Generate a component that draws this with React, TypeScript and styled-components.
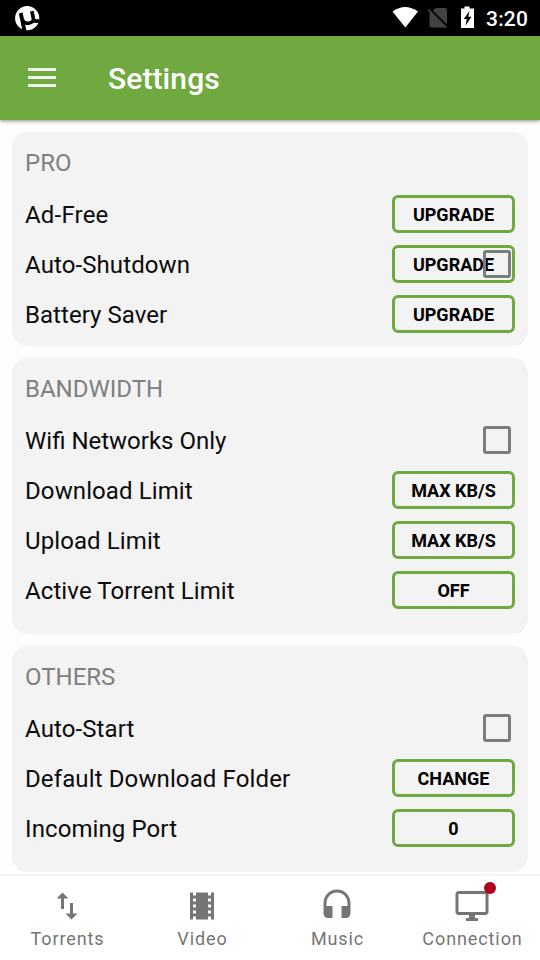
import React from "react";
import styled, { createGlobalStyle } from "styled-components";

const Global = createGlobalStyle`
  * { box-sizing: border-box; }
  body { margin: 0; background: #fff; font-family: Roboto, "Noto Sans", sans-serif; }
`;

const Screen = styled.div`
  width: 540px;
  height: 960px;
  display: flex;
  flex-direction: column;
  overflow: hidden;
  background: #fefefe;
`;

const StatusBar = styled.div`
  height: 36px;
  flex: none;
  background: #000;
  display: flex;
  align-items: center;
  justify-content: space-between;
  padding: 0 12px 0 14px;
`;

const StatusIcons = styled.div`
  display: flex;
  align-items: center;
  height: 36px;
`;

const Clock = styled.span`
  color: #fff;
  font-size: 21px;
  font-weight: 500;
  line-height: 36px;
  width: 42px;
  margin: 2px 0 0 10px;
  letter-spacing: 0.2px;
  white-space: nowrap;
`;

const Toolbar = styled.header`
  height: 84px;
  flex: none;
  background: #71a941;
  display: flex;
  align-items: center;
  padding-left: 28px;
  gap: 52px;
  box-shadow: 0 1px 4px rgba(0, 0, 0, 0.45);
`;

const MenuIcon = styled.svg`
  display: block;
  margin-bottom: 1px;
`;

const Title = styled.h1`
  margin: 2px 0 0;
  color: #fff;
  font-size: 30px;
  font-weight: 500;
  line-height: 36px;
  letter-spacing: 0.1px;
`;

const Content = styled.main`
  flex: 1;
  min-height: 0;
  display: flex;
  flex-direction: column;
  gap: 12px;
  padding: 12px 12px 0;
`;

const Card = styled.section<{ $bottom: number }>`
  flex: none;
  background: #f3f3f3;
  border-radius: 15px;
  padding: 13px 13px ${(p) => p.$bottom}px;
`;

const Heading = styled.h2`
  margin: 0;
  height: 44px;
  font-size: 24px;
  font-weight: 400;
  line-height: 36px;
  color: #808080;
`;

const Row = styled.div`
  position: relative;
  height: 50px;
  display: flex;
  align-items: center;
  justify-content: space-between;
`;

const Label = styled.span<{ $tracking?: number }>`
  font-size: 24px;
  line-height: 36px;
  margin-top: 2px;
  letter-spacing: ${(p) => p.$tracking ?? 0.1}px;
  color: #0b0b0b;
`;

const ActionButton = styled.button`
  width: 123px;
  height: 38px;
  padding: 1px 0 0;
  border: 3px solid #71a941;
  border-radius: 6px;
  background: transparent;
  color: #000;
  font: 700 18px/30px Roboto, sans-serif;
`;

const Checkbox = styled.span<{ $overlay?: boolean }>`
  width: 28px;
  height: 28px;
  border: 3px solid #7d7d7d;
  border-radius: 3px;
  margin: 0 4px 0 0;
  ${(p) => p.$overlay && "position: absolute; right: 0; top: 11px;"}
`;

const BottomNav = styled.nav`
  height: 86px;
  flex: none;
  display: grid;
  grid-template-columns: repeat(4, 1fr);
  background: #fff;
  border-top: 2px solid #f4f4f4;
`;

const Tab = styled.a`
  display: flex;
  flex-direction: column;
  align-items: center;
  padding-top: 12px;
  color: #757575;
`;

const TabIcon = styled.span`
  position: relative;
  width: 36px;
  height: 36px;
  margin-right: 1px;

  svg { display: block; }
`;

const Badge = styled.i`
  position: absolute;
  width: 12px;
  height: 12px;
  border-radius: 50%;
  background: #b00020;
  top: -6px;
  right: -6px;
`;

const TabLabel = styled.span`
  margin-top: 3px;
  font-size: 18px;
  line-height: 24px;
  letter-spacing: 0.9px;
`;

type Item = { label: string; action?: string; check?: boolean; tracking?: number };
type Group = { title: string; bottom: number; items: Item[] };

const groups: Group[] = [
  {
    title: "PRO",
    bottom: 7,
    items: [
      { label: "Ad-Free", action: "UPGRADE", tracking: 0.2 },
      { label: "Auto-Shutdown", action: "UPGRADE", check: true },
      { label: "Battery Saver", action: "UPGRADE", tracking: 0.05 },
    ],
  },
  {
    title: "BANDWIDTH",
    bottom: 19,
    items: [
      { label: "Wifi Networks Only", check: true, tracking: 0 },
      { label: "Download Limit", action: "MAX KB/S" },
      { label: "Upload Limit", action: "MAX KB/S" },
      { label: "Active Torrent Limit", action: "OFF" },
    ],
  },
  {
    title: "OTHERS",
    bottom: 19,
    items: [
      { label: "Auto-Start", check: true },
      { label: "Default Download Folder", action: "CHANGE", tracking: 0.12 },
      { label: "Incoming Port", action: "0" },
    ],
  },
];

const tabs = [
  {
    label: "Torrents",
    path: "M9 3L5 6.99h3V14h2V6.99h3L9 3zm7 14.01V10h-2v7.01h-3L15 21l4-3.99h-3z",
  },
  {
    label: "Video",
    path: "M18 3v2h-2V3H8v2H6V3H4v18h2v-2h2v2h8v-2h2v2h2V3h-2zM8 17H6v-2h2v2zm0-4H6v-2h2v2zm0-4H6V7h2v2zm10 8h-2v-2h2v2zm0-4h-2v-2h2v2zm0-4h-2V7h2v2z",
  },
  {
    label: "Music",
    path: "M12 1c-4.97 0-9 4.03-9 9v7c0 1.66 1.34 3 3 3h3v-8H5v-2c0-3.87 3.13-7 7-7s7 3.13 7 7v2h-4v8h3c1.66 0 3-1.34 3-3v-7c0-4.97-4.03-9-9-9z",
  },
  {
    label: "Connection",
    badge: true,
    path: "M21 2H3c-1.1 0-2 .9-2 2v12c0 1.1.9 2 2 2h7v2H8v2h8v-2h-2v-2h7c1.1 0 2-.9 2-2V4c0-1.1-.9-2-2-2zm0 14H3V4h18v12z",
  },
];

const Logo = () => (
  <svg width="26" height="26" viewBox="0 0 26 26">
    <circle cx="13.2" cy="13.2" r="12.1" fill="#fff" />
    <g fill="none" stroke="#000">
      <path d="M6.700 8L10.500 26" strokeWidth="3.800" />
      <path d="M8.500 15c1.200 2.800 3.200 3.600 6.200 3.200 3-.5 4.800-2 4.800-4.200" strokeWidth="3.400" />
      <path d="M17.800 6.200l1.700 7.800q.8 3 5.800 1.800" strokeWidth="3.600" />
    </g>
  </svg>
);

const StatusGlyphs = () => (
  <svg width="84" height="36" viewBox="0 0 84 36">
    <path d="M.5 11.500Q13 2.500 26 11.500L13.300 27.500z" fill="#fff" />
    <path d="M43.500 8H53q2 0 2 2v15.500q0 2-2 2H39.500q-2 0-2-2V13.500z" fill="#424242" />
    <path d="M38.500 9.500l17 17" stroke="#000" strokeWidth="2" />
    <path d="M36.200 9.700l18 18" stroke="#424242" strokeWidth="1.800" />
    <path d="M72.500 6.500h5v2H82V28H69V8.500h3.500z" fill="#fff" />
    <path d="M77.500 11l-5.800 8h3.100l-1.300 6.800 6-9h-3.200z" fill="#000" />
  </svg>
);

export default function App() {
  return (
    <>
      <Global />
      <Screen>
        <StatusBar>
          <Logo />
          <StatusIcons>
            <StatusGlyphs />
            <Clock>3:20</Clock>
          </StatusIcons>
        </StatusBar>
        <Toolbar>
          <MenuIcon width="28" height="21" viewBox="0 0 28 21" fill="#f0f5ec">
            <path d="M0 1h28v3H0zM0 9h28v3H0zM0 17h28v3H0z" />
          </MenuIcon>
          <Title>Settings</Title>
        </Toolbar>
        <Content>
          {groups.map((group) => (
            <Card key={group.title} $bottom={group.bottom}>
              <Heading>{group.title}</Heading>
              {group.items.map((item) => (
                <Row key={item.label}>
                  <Label $tracking={item.tracking}>{item.label}</Label>
                  {item.action && <ActionButton>{item.action}</ActionButton>}
                  {item.check && <Checkbox $overlay={!!item.action} />}
                </Row>
              ))}
            </Card>
          ))}
        </Content>
        <BottomNav>
          {tabs.map((tab) => (
            <Tab key={tab.label}>
              <TabIcon>
                <svg width="36" height="36" viewBox="0 0 24 24" fill="currentColor">
                  <path d={tab.path} />
                </svg>
                {tab.badge && <Badge />}
              </TabIcon>
              <TabLabel>{tab.label}</TabLabel>
            </Tab>
          ))}
        </BottomNav>
      </Screen>
    </>
  );
}
